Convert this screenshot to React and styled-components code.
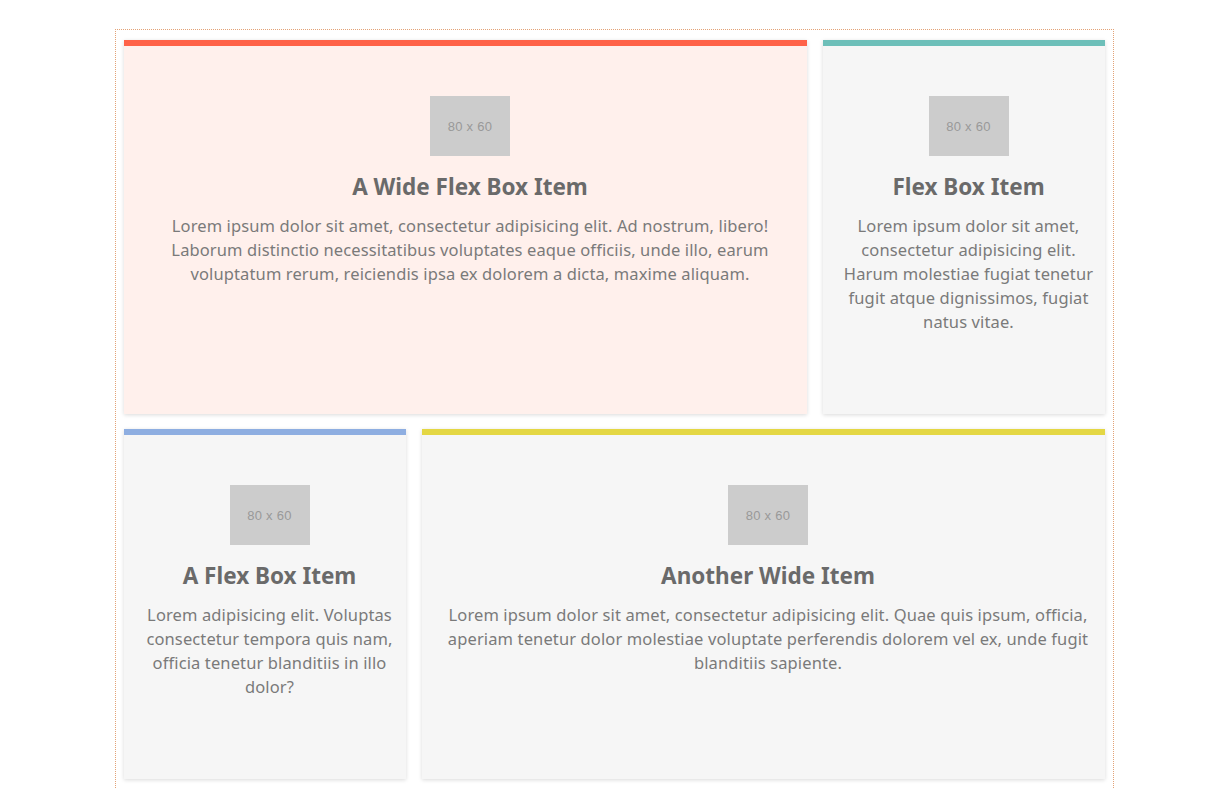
import React from "react";
import styled, { createGlobalStyle } from "styled-components";

const Global = createGlobalStyle`
  html, body { margin: 0; padding: 0; background: #fff; }
  body { font-family: "Noto Sans", "Liberation Sans", sans-serif; }
  * { box-sizing: border-box; }
`;

const Container = styled.div`
  width: 999px;
  margin: 29px auto 0;
  border: 1px dotted #e3a276;
  padding: 10px 7px 10px 8px;
  display: flex;
  flex-direction: column;
  gap: 15px;
`;

const Row = styled.div`
  display: grid;
  grid-template-columns: ${(p) => (p.$wideFirst ? "683px 282px" : "282px 683px")};
  column-gap: 16px;
`;

const Card = styled.section`
  background: ${(p) => p.$bg || "#f6f6f6"};
  border-top: 6px solid ${(p) => p.$accent};
  box-shadow: 0 1px 4px rgba(0, 0, 0, 0.15);
  padding: 50px 10px 80px 20px;
  display: flex;
  flex-direction: column;
  align-items: center;
  text-align: center;
`;

const Placeholder = styled.div`
  width: 80px;
  height: 60px;
  background: #cccccc;
  color: #999999;
  font-family: "Liberation Sans", Arial, sans-serif;
  font-size: 13px;
  letter-spacing: 0.3px;
  display: flex;
  align-items: center;
  justify-content: center;
  margin-bottom: 18px;
`;

const Title = styled.h2`
  margin: 0 0 14px;
  font-size: 22.5px;
  line-height: 26px;
  font-weight: 700;
  color: #6a6a6a;
`;

const Text = styled.p`
  margin: 0;
  font-size: 16.5px;
  letter-spacing: 0.12px;
  line-height: 24px;
  color: #7a7a7a;
`;

const items = [
  [
    {
      title: "A Wide Flex Box Item",
      accent: "#ff6248",
      bg: "#fff0ec",
      text: "Lorem ipsum dolor sit amet, consectetur adipisicing elit. Ad nostrum, libero! Laborum distinctio necessitatibus voluptates eaque officiis, unde illo, earum voluptatum rerum, reiciendis ipsa ex dolorem a dicta, maxime aliquam.",
    },
    {
      title: "Flex Box Item",
      accent: "#6dbfb9",
      text: "Lorem ipsum dolor sit amet, consectetur adipisicing elit. Harum molestiae fugiat tenetur fugit atque dignissimos, fugiat natus vitae.",
    },
  ],
  [
    {
      title: "A Flex Box Item",
      accent: "#8eaee1",
      text: "Lorem adipisicing elit. Voluptas consectetur tempora quis nam, officia tenetur blanditiis in illo dolor?",
    },
    {
      title: "Another Wide Item",
      accent: "#e4d744",
      text: "Lorem ipsum dolor sit amet, consectetur adipisicing elit. Quae quis ipsum, officia, aperiam tenetur dolor molestiae voluptate perferendis dolorem vel ex, unde fugit blanditiis sapiente.",
    },
  ],
];

export default function App() {
  return (
    <>
      <Global />
      <Container>
        {items.map((row, i) => (
          <Row key={i} $wideFirst={i === 0}>
            {row.map((it) => (
              <Card key={it.title} $accent={it.accent} $bg={it.bg}>
                <Placeholder>80 x 60</Placeholder>
                <Title>{it.title}</Title>
                <Text>{it.text}</Text>
              </Card>
            ))}
          </Row>
        ))}
      </Container>
    </>
  );
}
